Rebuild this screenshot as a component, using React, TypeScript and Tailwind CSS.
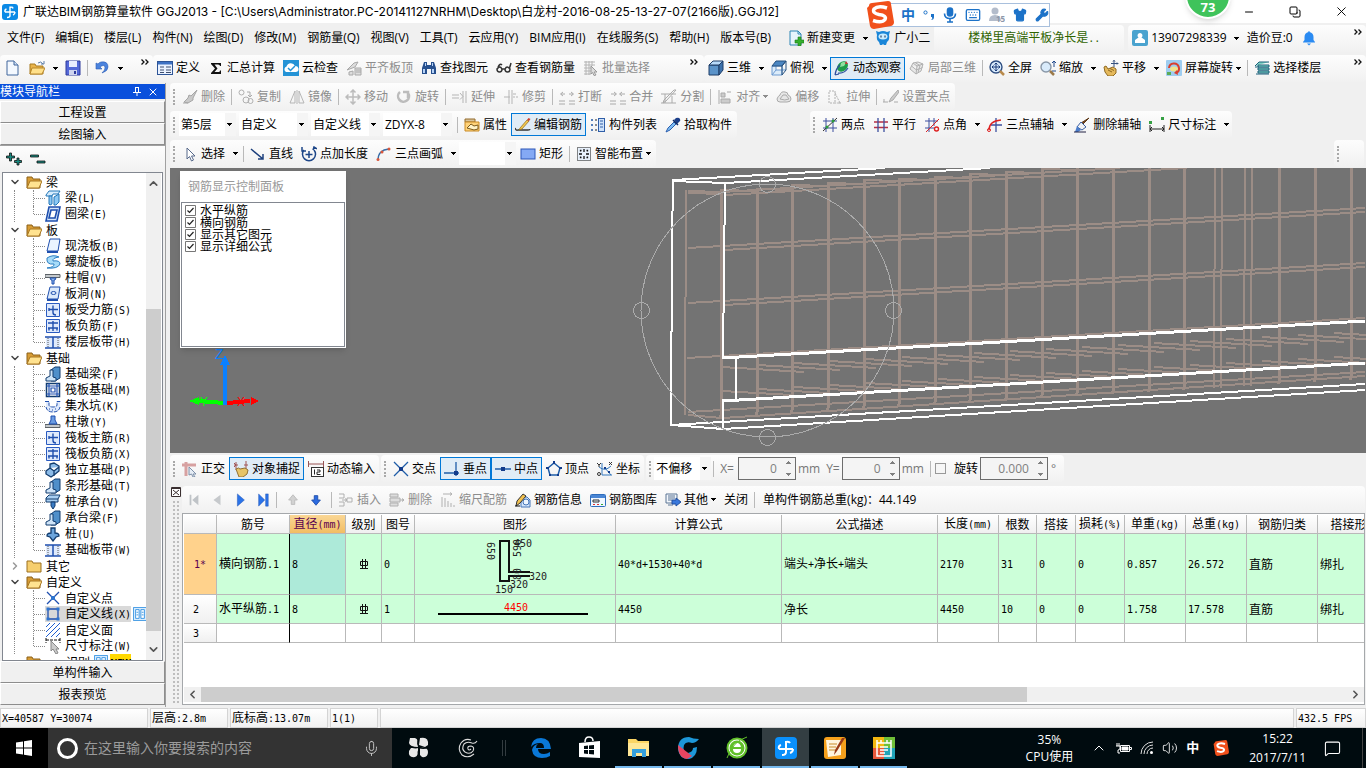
import React from 'react';
import { Mic, Keyboard, Shirt, Wrench, Minus, Copy, X, ChevronUp, ChevronDown, ChevronLeft, ChevronRight, Volume2, MessageSquare } from 'lucide-react';

const UI = "font-['Open_Sans','Noto_Sans_CJK_SC',sans-serif]";

const ICONS: Record<string, React.ReactNode> = {
  app: <><rect width="16" height="16" rx="3" fill="#0b8ae6" /><path d="M8 2.500v9q0 2-3 2M3 8h10M8 3.500q2.500-1 3 1M3 8q-.5-2.500 1.500-3M13 8q0 2.500-2 3" fill="none" stroke="#fff" strokeWidth="1.400" /></>,
  fresh: <><path d="M2 1h7l4 4v10H2z" fill="#f4f9ff" stroke="#41669c" /><path d="M9 1v4h4" fill="#cfe0f5" stroke="#41669c" /></>,
  open: <><path d="M1 14V4h5l1 2h7v8z" fill="#e9b44b" stroke="#a87a20" /><path d="M3 8h13l-3 6H1z" fill="#ffe08a" stroke="#b8872b" /><path d="M9 3q3-2.500 5 1M12 4h3V1" fill="none" stroke="#5e7fa8" /></>,
  save: <><path d="M1 1h14v14H1z" fill="#5468d8" stroke="#2e3a9c" /><path d="M4 1h8v6H4z" fill="#e9ecff" /><path d="M4 10h8v5H4z" fill="#cfd4ee" /><path d="M9 11h2v3H9z" fill="#2e3a9c" /></>,
  undo: <path d="M2 3v6h6L6 7q4-3 5 0 .5 3-3 6 6-2 6-6 0-6-7-5-2 .5-3 2z" fill="#4b83dd" stroke="#2b5db5" strokeWidth=".6" />,
  define: <><rect x=".5" y="1.500" width="15" height="13" fill="#eaf2ff" stroke="#2e5597" /><path d="M1 2h14v2.500H1z" fill="#3e72c4" /><path d="M3 7h4M3 10h4M3 12.500h4M9 7h5M9 10h5M9 12.500h5" stroke="#3f4f6e" /></>,
  sigma: <path d="M3 3h10v3h-1q0-1.500-2-1.500H6.500L9.500 8.500 6.500 12h4q1.500 0 1.500-1.500h1V14H3v-1l4-4.500L3 4z" fill="#111" />,
  cloud: <><rect width="16" height="16" fill="#2493d6" /><path d="M3 12a3 3 0 0 1 .5-5.500 4.500 4.500 0 0 1 8.500-.5 3 3 0 0 1 1 6z" fill="#fff" /><path d="m5 8 2.500 2.500L12 6" fill="none" stroke="#2493d6" strokeWidth="1.500" /></>,
  alignTop: <path d="m1 10 7-7 4-1-3 5zM3 12l4-1v4H3zM9 8h6v7H9zM10 10h5M10 12h5" fill="#ddd" stroke="#a8a8a8" />,
  binoc: <><path d="M3 2h3v3h4V2h3l2 6v6h-5V9H6v5H1V8z" fill="#27508e" /><path d="M2 9h2v4H2zM11 9h2v4h-2zM4 3h1v3H4zM11 3h1v3h-1z" fill="#b6d2f7" /></>,
  glasses: <path d="M1 9q3-4 5 0 0 3-2.500 3T1 9zM9 9q2-4 5 0 0 3-2.500 3T9 9zM6 9h3M2 7q2-4 4-2M13.500 8q1-3 1.500-5" fill="none" stroke="#333" strokeWidth="1.500" />,
  batch: <><path d="M1 2h11M1 5h11M1 8h7M1 11h7M1 14h7M3 1v14M6 1v14M9 1v5" stroke="#b4b4b4" /><path d="m8 6 6 6h-3l2 3-2 .5-1.500-3L8 14z" fill="#ddd" stroke="#999" /></>,
  cube: <><path d="M1 5h10v10H1z" fill="#5b93c9" stroke="#1e3c66" /><path d="m1 5 4-4h10l-4 4z" fill="#b8dafa" stroke="#1e3c66" /><path d="m11 5 4-4v9l-4 5z" fill="#3d72ac" stroke="#1e3c66" /></>,
  cubeTop: <><path d="M1 6h10v9H1zM5 1v9h10M5 10l-4 5" fill="#dcecfa" stroke="#6c9ad0" /><path d="m1 6 4-5h10l-4 5z" fill="#4b86c2" stroke="#26507e" /><path d="m11 6 4-5v9l-4 5z" fill="none" stroke="#26507e" /></>,
  orbit: <><ellipse cx="8.500" cy="6.500" rx="6" ry="4.500" transform="rotate(-40 8.500 6.500)" fill="#1f9c4a" /><path d="M7 3q3-2 5 0l-2 3-4 1z" fill="#8fe0a0" /><path d="M1 15q1-7 5-10M4 13q6 1 10-5M1 15l1-4M1 15l4-1" fill="none" stroke="#2c4f9e" strokeWidth="1.200" /><path d="m12 1 2 3-3 0z" fill="#c33" /></>,
  part3d: <path d="m1 9 3-6 5-1 5 2-2 7-5 3zM4 3l4 3 6-2M8 6l-1 8M2.500 6l5 4 6-2.500M6 2.500l5 3-2 7" fill="#e8e8e8" stroke="#b0b0b0" />,
  full: <><circle cx="7" cy="7" r="6" fill="#d7e9fb" stroke="#2f4f82" strokeWidth="1.400" /><path d="M7 3v8M3 7h8M5.500 4.500 7 3l1.500 1.500M5.500 9.500 7 11l1.500-1.500M4.500 5.500 3 7l1.500 1.500M9.500 5.500 11 7 9.500 8.500" fill="none" stroke="#1b3c7a" /><path d="m11 11 4 4" stroke="#b98b4c" strokeWidth="2.500" /></>,
  zoom: <><circle cx="6" cy="7" r="5" fill="#d9ebfb" stroke="#8a98a8" strokeWidth="1.400" /><path d="m10 11 4 4" stroke="#9c7a4a" strokeWidth="2.500" /><path d="M14 1v6M12 3l2-2 2 2M12 11h4" fill="none" stroke="#224a8c" /></>,
  pan: <><path d="M1 7l2-1 2 3 5-2 3 2v4l-3 3H5l-3-4z" fill="#e5b95c" stroke="#8f6a22" /><path d="M11 0v7M8 3.500h7M10 1.500 11 .5l1 1M14 2.500l1 1-1 1" stroke="#35517f" fill="none" /><path d="M5 10l4 2M7 8.500l4 2" stroke="#8f6a22" /></>,
  spin: <><rect width="16" height="16" rx="1" fill="#9ecdf0" /><ellipse cx="8" cy="9" rx="4" ry="2.500" fill="#f2e28a" /><path d="M1 12h4v3H1z" fill="#5cab56" /><path d="M3 8a5 5 0 1 1 7 5" fill="none" stroke="#d93f2e" strokeWidth="2" /><path d="m11 10-3 3 4 2z" fill="#d93f2e" /></>,
  floors: <path d="M1 6 5 2h10M1 7h4M4 5h11v2H4zM4 8h11v2H4zM4 11h11v2H4zM2 14h13" fill="#7fd4c4" stroke="#1b5f7b" />,
  brush: <path d="M15 1 9 7 7 6l-1 3-4 4 4 1 5-3V9zM1 14h5" fill="#c9c9c9" stroke="#a5a5a5" />,
  copy: <><g fill="none" stroke="#b0b0b0"><circle cx="3.500" cy="3.500" r="2.500" /><circle cx="8" cy="11" r="3" /><circle cx="12.500" cy="12" r="2.500" /></g><path d="M9 3h3v4M10 6l2 2 2-2" fill="none" stroke="#aaa" /></>,
  mirror: <path d="M6 2v12H1zM10 2v12h5zM8 1v14" fill="none" stroke="#b5b5b5" />,
  move: <path d="M8 1v14M1 8h14M5.500 3.500 8 1l2.500 2.500M5.500 12.500 8 15l2.500-2.500M3.500 5.500 1 8l2.500 2.500M12.500 5.500 15 8l-2.500 2.500" fill="none" stroke="#bcbcbc" strokeWidth="1.500" />,
  rotate: <path d="M4 3a5.500 5.500 0 1 0 8 1M12 9V3H7" fill="none" stroke="#bcbcbc" strokeWidth="2.500" />,
  extend: <path d="M0 6h7M0 9h7M8 4l3 3.500-3 3M11 2v12M14 2v12" fill="none" stroke="#b5b5b5" />,
  trim: <path d="M1 8h6M6 1v14M9 1v14M10 8h2M13 8h2M10 5h3" fill="none" stroke="#b5b5b5" />,
  breakUp: <path d="M0 12h6M10 12h6M0 15h6M10 15h6M2 5h4M4 3 1.500 5 4 7M10 5h4M12 3l2.500 2L12 7" fill="none" stroke="#aaa" />,
  merge: <path d="M0 12h6M10 12h6M0 15h6M10 15h6M1 5h5M4 3l2.500 2L4 7M10 5h5M12 3 9.500 5 12 7" fill="none" stroke="#aaa" />,
  split: <path d="M0 5h15M0 14h15M4 14V5M11 14V7M15 1 5 12l-3 2 1-3L13 1z" fill="none" stroke="#aaa" />,
  align: <path d="M2 1v14M4 4h4v4H4zM4 10h9v4H4zM10 3h4" fill="#ccc" stroke="#aaa" />,
  offset: <path d="M1 10q1-3 3-4 1-4 5-3 3 0 3 3 3 1 3 4 0 3-4 3H4q-3 0-3-3zM4 10l3-4h3l3 4q-4 2-9 0z" fill="#e6e6e6" stroke="#aaa" />,
  stretch: <path d="M2 2h6v12H2zM8 4l5 10H8M12 14h2" fill="none" stroke="#b0b0b0" strokeDasharray="2 1" />,
  grips: <path d="M0 13h5M11 13h4M1 10v3M15 1 8 9l-2 4 4-2 6-8z" fill="#ccc" stroke="#aaa" />,
  props: <><path d="M1 2h10v3H1z" fill="#d8c39a" stroke="#946c2c" /><path d="M1 5h14v9H1z" fill="#ffd37a" stroke="#c98a25" /><path d="m3 11 4-4 3 2 4-1v4l-4 1z" fill="#fff3c9" stroke="#7c5a1b" /></>,
  editBar: <><path d="M0 11q1 3 3 2h10q2 0 2-1" fill="none" stroke="#333" strokeWidth="1.300" /><path d="m5 11 7-8 2 1-7 8-3 1z" fill="#f4c84d" stroke="#8a6a1c" strokeWidth=".7" /><path d="m12 3 1.500-2 2 1L14 4z" fill="#d23c2a" /></>,
  list: <><path d="M1 2h2v2H1zM1 7h2v2H1zM1 12h2v2H1z" fill="#557fbb" /><path d="M5 3h2M5 8h2M5 13h2" stroke="#222" /><rect x="8.500" y="1.500" width="6" height="13" fill="#cfe2fa" stroke="#2f5ea8" /><path d="M10 4h3M10 7h3M10 10h3" stroke="#2f5ea8" /></>,
  picker: <><path d="m9 3 2-2q3-1 4 1t-1 3l-2 2z" fill="#1c3f8a" /><path d="m9 5-6 6-2 4 4-2 6-6z" fill="#7ebcf2" stroke="#2c5fae" /><path d="m8 3 5 5" stroke="#122d66" strokeWidth="1.500" /></>,
  twoPt: <><path d="M1 4h14M1 11h14M4 1v14M11 1v14" stroke="#3c4f9e" /><path d="M1 14 15 1" stroke="#333" /><circle cx="5" cy="10" r="1.500" fill="#2a9d3a" /><circle cx="11" cy="4" r="1.500" fill="#2a9d3a" /></>,
  parallel: <><path d="M1 5h14M1 10.500h14" stroke="#b52f45" strokeWidth="1.300" /><path d="M5 1v14M11 1v14" stroke="#3c4f9e" strokeWidth="1.300" /></>,
  ptAngle: <><path d="M1 4h13M1 11h9M5 1v14M10 1v8" stroke="#3c4f9e" /><path d="M2 15 15 2" stroke="#d22" /><circle cx="12.500" cy="12" r="2" fill="none" stroke="#d22" strokeWidth="1.400" /></>,
  threePt: <><path d="M9 1v14M4 8h11" stroke="#3c4f9e" strokeWidth="1.300" /><path d="M2 13Q2 4 14 3" fill="none" stroke="#d22" strokeWidth="1.400" /><circle cx="2" cy="13" r="1.500" fill="none" stroke="#d22" /></>,
  eraseAx: <><path d="M15 1 9 7l-2-1z" fill="#7a4b1f" stroke="#5b3514" /><path d="M7 5l5 5-4 3-5-3z" fill="#f2f2f2" stroke="#3b5ea0" /><path d="m3 9 4 4-3 2H1z" fill="#4d7ecb" /><path d="M0 15h12" stroke="#224" /></>,
  dim: <><path d="M1 8v7M15 8v7M1 12h14M3 10l-2 2 2 2M13 10l2 2-2 2" fill="none" stroke="#222" /><path d="M0 4h3v3H0zM12 0h3v3h-3z" fill="#35a043" /></>,
  cursor: <path d="M5 2v11l2.500-2.500L9.500 15l2-1-2-4H13z" fill="#fff" stroke="#57698a" />,
  line: <path d="m1 3 12 10M13 8v5H8" fill="none" stroke="#1c3f7c" strokeWidth="1.500" />,
  ptLen: <path d="M3 4a6.500 6.500 0 1 0 10 0M8 5v7M4.500 8.500h7M1 1v4h4M12 4l1-3 3 2" fill="none" stroke="#1d4688" strokeWidth="1.500" />,
  arc: <><path d="M2 14Q2 4 13 3" fill="none" stroke="#3b6ea8" strokeWidth="1.300" /><g fill="#d8573c"><circle cx="2" cy="13.500" r="1.500" /><circle cx="6" cy="6" r="1.500" /><circle cx="13" cy="3" r="1.500" /></g></>,
  rect: <rect x="1" y="3" width="14" height="10" fill="#84a9f4" stroke="#2c57b8" />,
  smart: <><rect x="1.500" y="1.500" width="13" height="13" fill="#e8f1fc" stroke="#111" strokeDasharray="1 1" /><path d="M8 3v3M8 10v3M3 8h3M10 8h3M4.500 5.500v-1h1M10.500 4.500h1v1M4.500 10.500v1h1M11.500 10.500v1h-1" fill="none" stroke="#111" strokeWidth="1.300" /></>,
  ortho: <><path d="M0 4h14M4 1v14" stroke="#d7a1a1" strokeWidth="3" /><path d="m7 6 7 7h-3l2 3h-2l-1.500-3L7 14z" fill="#e6edf5" stroke="#7d8fa8" /></>,
  snap: <><path d="M3 1v8M13 0v8M1 4h4M11 4h4M1 2l2 2-2 2" stroke="#a05252" fill="none" /><path d="M3 8q3-2 4 0l5-1 3 2-1 4-4 3H6z" fill="#e7c467" stroke="#927032" /></>,
  dyn: <><path d="M.5 0v6M15.500 0v6M1 3h14" stroke="#955" /><rect x="3.500" y="6.500" width="12" height="9" fill="#fff" stroke="#333" /><path d="M6.500 8.500v5M9 9h3v2H9v2.500h3.500" fill="none" stroke="#222" /></>,
  cross: <><path d="m1 1 14 14M15 1 1 15" stroke="#1f5da8" strokeWidth="1.300" /><path d="M6 6h4v4H6z" fill="#133c8b" /></>,
  perp: <><path d="M0 12h15M12 1v14" stroke="#1f5da8" strokeWidth="1.300" /><path d="M10 10h4v4h-4z" fill="#133c8b" /></>,
  mid: <><path d="M0 8h16" stroke="#1f5da8" strokeWidth="1.300" /><path d="M6 6h4v4H6z" fill="#133c8b" /></>,
  penta: <><path d="m8 2 6 5-2 7H4L2 7z" fill="none" stroke="#1f5da8" strokeWidth="1.500" /><path d="M7 0h2v3H7zM0 6h3v2H0zM13 6h3v2h-3zM3 13h2v2H3zM11 13h2v2h-2z" fill="#133c8b" /></>,
  coord: <><path d="M5 2v12h10M2 6q6 5 12-1M8 7l6 7" fill="none" stroke="#3478be" /><path d="M0 2l2 2 2-2M2 4v2M12 1l3 3M15 1l-3 3" fill="none" stroke="#333" /><circle cx="2" cy="13" r="1.500" fill="none" stroke="#333" /><path d="M7 6h2v2H7zM11 10h2v2h-2z" fill="#133c8b" /></>,
  insert: <path d="M1 2h5v4H1M1 10h5v4H1M9 6h5v4H9zM4 8h5M7 6.500 9 8 7 9.500" fill="none" stroke="#b0b0b0" />,
  delRow: <path d="M1 2h8v3H1zM1 6h10v4H1zM1 11h8v3H1zM11 8h4M13 6.500 15 8l-2 1.500" fill="#ddd" stroke="#b0b0b0" />,
  scaleBar: <path d="M3 2h9M10 .5 12 2l-2 1.500M2 5v10M5 6v9M8 9v6M11 11v4M14 13v2" fill="none" stroke="#b0b0b0" />,
  info: <><path d="M6 5h6l3 3v7H6z" fill="#d5e6fb" stroke="#4474b8" /><circle cx="11" cy="10" r="3" fill="#eef6ff" stroke="#4474b8" /><path d="M1 14 2 9l6-7 3 2-6 7z" fill="#f2c14e" stroke="#333" /><path d="M0 14h5" stroke="#111" /></>,
  gallery: <><rect x=".5" y="2.500" width="15" height="12" rx="1" fill="#f0f7ff" stroke="#2e6dbd" /><path d="M1 3h14v3H1z" fill="#4a86d4" /><path d="M3 8h6v2H3z" fill="none" stroke="#333" /><path d="M3 12h2v1H3zM7 12h2v1H7z" fill="#d33" /><path d="M11 12h2v1h-2z" fill="#3a3" /></>,
  other: <><path d="M1 2h11v9H1z" fill="#f2f6fb" stroke="#5a7494" /><path d="M3 4h7M3 6h7M3 8h4M3 13h5" stroke="#5a7494" /><path d="M7 8h4V6l5 4-5 4v-2H7z" fill="#3a78dc" stroke="#204f9f" /></>,
  first: <path d="M3 2v12h2V2zM13 2v12L6 8z" fill="#bfc3c7" />,
  prev: <path d="M12 2v12L4 8z" fill="#c6c9cc" />,
  next: <path d="M5 1v14l8-7z" fill="#2b73e8" stroke="#1b4fae" strokeWidth=".5" />,
  last: <path d="M3 1v14l7-7zM11 1h3v14h-3z" fill="#2b73e8" stroke="#1b4fae" strokeWidth=".5" />,
  up: <path d="m8 2 5 6h-3v5H6V8H3z" fill="#d2d2d2" stroke="#b9b9b9" />,
  down: <path d="m8 14 5-6h-3V3H6v5H3z" fill="#2b6be0" stroke="#1e4da8" />,
  newChange: <><path d="M2 1h8l3 3v11H2z" fill="#e7f4fc" stroke="#2e86b5" /><path d="M10 1v3h3" fill="none" stroke="#2e86b5" /><path d="M10 7h3v3h3v3h-3v3h-3v-3H7v-3h3z" fill="#35b02d" stroke="#1d7a18" strokeWidth=".6" /></>,
  robot: <><path d="M1 1l3 1q4-2 8 0l3-1-1 4q1 5-2 7l-1 3H9l-1-1-1 1H5l-1-3Q1 10 2 5z" fill="#1a86d8" /><ellipse cx="8" cy="6.500" rx="4.500" ry="3" fill="#c9ecff" /><path d="M6 5.500v2M10 5.500v2" stroke="#124" /></>,
  avatar: <><rect width="16" height="16" rx="2" fill="#4aa3cf" /><path d="M8 3a2.500 2.500 0 0 1 1.500 4.500L13 10v3H3v-3l3.500-2.500A2.500 2.500 0 0 1 8 3z" fill="#fff" /></>,
  bell: <path d="M7.500 1h1v1q4 1 4 5v3l1.500 2v.5H2V12l1.500-2V7q0-4 4-5zM6 13.500h4L8 15.500z" fill="#2b8bf2" />,
  folder: <><path d="M1 3h5l1 2h7v9H1z" fill="#d79c35" stroke="#8c6018" /><path d="M4 7h12l-3 7H1z" fill="#ffe28f" stroke="#a87722" /></>,
  folderShut: <path d="M1 3h5l1 2h8v9H1z" fill="#f6ce6d" stroke="#9c7020" />,
  beam: <><path d="M1 5 4 1h11l-2 3H8L7 6H1z" fill="#d5ecfd" stroke="#2377b8" /><path d="M4 6h3v8l-2 1-1-1zM9 7l5-3v8l-3 3H9z" fill="#8cc8f4" stroke="#2377b8" /></>,
  slab: <><path d="M5 1h10l-2 12H2z" fill="#eaf4ff" stroke="#1f4fae" /><path d="M2 13h11v2H2z" fill="#1f4fae" /></>,
  ring: <path d="M4 1h11l-3 14H1zM6 4h6l-2 8H4z" fill="#d5e7fb" stroke="#1f4fae" strokeWidth="1.600" fillRule="evenodd" />,
  spiral: <path d="M2 4q6-4 12-1-7 1-6 4 7-1 7 3-2 5-13 4 8-1 7-4-8 1-7-6z" fill="#a6dbf8" stroke="#2e80c4" />,
  cap: <><path d="M0 4.500h15v3H0z" fill="#c4c8cb" stroke="#5c6267" /><path d="M5 8h6l-1 2H9v4H7v-4H6z" fill="#8bb6ee" stroke="#1f4fae" /></>,
  hole: <><path d="M5 1h10l-2 12H2z" fill="#dceafb" stroke="#1f4fae" /><path d="M2 13h11v2H2z" fill="#1f4fae" /><ellipse cx="8.500" cy="7" rx="2.500" ry="1.500" fill="none" stroke="#1f4fae" /></>,
  force: <><path d="M1.500 1.500h13v13h-13z" fill="#dfeafc" stroke="#2a5bc0" /><path d="M4 6v3M4 7.500h9M8 3.500v7q0 2.500 3 2.500" fill="none" stroke="#1f4fae" strokeWidth="1.400" /></>,
  neg: <><path d="M1.500 1.500h13v13h-13z" fill="#dfeafc" stroke="#2a5bc0" /><path d="M3 5h10M3 10h10M8 3v10M4 10v2.500M12 10v2.500" fill="none" stroke="#1f4fae" strokeWidth="1.400" /></>,
  strip: <><path d="M1 3h14v11H1z" fill="#dfeafc" /><path d="M0 3h16M0 14h16M8 3v11" stroke="#1f4fae" strokeWidth="1.500" /><path d="M3 4v10M13 4v10" stroke="#555" strokeDasharray="1 1" /></>,
  footing: <><path d="m6 4 4-3h5v11l-5 3H6z" fill="#4f8fca" stroke="#123c6e" /><path d="M5 4h3v7l3 1v3H1v-3l4-2z" fill="#cfe4f8" stroke="#123c6e" /></>,
  raft: <><path d="M1.500 1.500h13v13h-13z" fill="#fff" stroke="#123c6e" strokeWidth="1.500" /><path d="M1 4h14M1 12h14M4 1v14M12 1v14M6 6h4v4H6z" fill="none" stroke="#1f4fae" strokeWidth="1.200" /></>,
  pit: <><path d="M1 3h3v5q4 3 8 0V3h3v5q-1 6-7 6T1 8z" fill="#dfeafc" /><path d="M0 3.500h4V7q0 2 4 2t4-2V3.500h4M1 9q1 5 7 5t7-5" fill="none" stroke="#1f4fae" strokeDasharray="4 1" /><path d="M4 11h1M7 12h1M10 11h1" stroke="#1f4fae" /></>,
  pier: <><path d="M0 10.500h15v3H0z" fill="#c4c8cb" stroke="#5c6267" /><path d="M6 2h4v4l2 4H4l2-4z" fill="#6b9ce2" stroke="#1f4fae" /></>,
  block: <path d="m1 9 4-3V2l4-1 5 3v5l-5 4-3 2-5-3zM5 6l4 3 5-4M9 9v5" fill="#8bbbe8" stroke="#123c6e" strokeWidth="1.300" />,
  pileCap: <><path d="m1 4 3-3h11l-2 4v3H1zM1 5h12" fill="#a9cff2" stroke="#123c6e" /><path d="M6 8h4v4l-2 3-2-3z" fill="#3a7cc4" stroke="#123c6e" /></>,
  pile: <path d="M6 2h4v5q4 0 4 3l-3 1-3 4-3-4-3-1q0-3 4-3z" fill="#6ba4dc" stroke="#123c6e" strokeWidth="1.300" />,
  pt: <><path d="m2 2 12 12M14 2 2 14" stroke="#1f4fae" strokeWidth="1.300" /><path d="M6 6h4v4H6z" fill="#2d74cf" /></>,
  poly: <><path d="M3 3h10v10H3z" fill="none" stroke="#1f4fae" strokeWidth="1.300" /><path d="M1.500 1.500h3v3h-3zM11.500 1.500h3v3h-3zM1.500 11.500h3v3h-3zM11.500 11.500h3v3h-3z" fill="#2d74cf" /></>,
  hatch: <path d="m1 5 4-4M1 10l9-9M1 15 15 1M6 15l9-9M11 15l4-4" stroke="#1f5fd0" />,
  dimTree: <><path d="M1 0v5M15 0v5M1 2h14" stroke="#111" strokeDasharray="3 1" /><path d="M6 3v10l2-2 3 5 2-1-2-4h3z" fill="#ccc" stroke="#888" /></>,
  guide: <><path d="M.5.5h15v15H.5z" fill="#d7ecff" stroke="#2f8fe0" /><path d="M3 3h4v10H3zM9 3h4v10H9z" fill="#fff" stroke="#2f8fe0" /><path d="M4 6h2M4 9h2M10 6h2M10 9h2" stroke="#2f8fe0" /></>,
};

const Icon: React.FC<{ name: string; className?: string }> = ({ name, className = 'size-4' }) => (
  <svg viewBox="0 0 16 16" className={`${className} shrink-0`} aria-hidden="true">{ICONS[name]}</svg>
);

// SimSun-like text: full-width Chinese with half-width Latin
const Sim: React.FC<{ children: string; leading?: string }> = ({ children, leading = 'leading-4' }) => (
  <span className={`font-['Noto_Sans_CJK_SC',sans-serif] text-xs whitespace-pre ${leading}`}>
    {children.split(/([\x20-\x7e]+)/).map((part, i) =>
      i % 2 ? <span key={i} className="font-['DejaVu_Sans_Mono',monospace] text-[10px]">{part}</span> : part
    )}
  </span>
);

const Caret: React.FC<{ className?: string }> = ({ className = '' }) => (
  <svg viewBox="0 0 5 3" className={`h-[3px] w-[5px] shrink-0 ${className}`} fill="currentColor" shapeRendering="crispEdges"><path d="M0 0h5L2.500 3z" /></svg>
);

interface ToolProps { icon?: string; label: string; off?: boolean; on?: boolean; split?: boolean; menu?: boolean }

const Tool: React.FC<ToolProps> = ({ icon, label, off, on, split, menu }) => (
  <>
    <button
      disabled={off}
      aria-pressed={on}
      className={`flex h-[23px] shrink-0 items-center gap-[3px] border-y px-1 whitespace-nowrap ${on ? 'border-[#0078d7] bg-[#e0ecf6] outline outline-1 -outline-offset-1 outline-[#0078d7]' : 'border-transparent'} ${off ? 'text-[#8d8d8d]' : 'text-black'}`}
    >
      {icon && <Icon name={icon} />}
      {label}
      {menu && <Caret />}
    </button>
    {split && <button aria-label={`${label} 更多`} className={`flex h-[23px] w-3 shrink-0 items-center justify-center ${off ? 'text-[#8d8d8d]' : ''}`}><Caret /></button>}
  </>
);

const Sep = () => <span className="mx-0.5 h-4 w-px shrink-0 bg-[#b9b9b9]" />;

const Grip = () => <span className="mx-[3px] h-4 w-0 shrink-0 border-l-2 border-dotted border-[#a9a9a9]" />;

const More: React.FC<{ className?: string }> = ({ className = '' }) => (
  <button aria-label="更多" className={`mb-3 shrink-0 px-1 ${className}`}>
    <svg viewBox="0 0 8 6" className="h-1.5 w-2" fill="none" stroke="#111" strokeWidth="1.300"><path d="m.5.5 2.500 2.500L.5 5.500M4.500.5 7 3 4.500 5.500" /></svg>
  </button>
);

const Bar: React.FC<{ className?: string; children?: React.ReactNode }> = ({ className = '', children }) => (
  <div className={`flex h-[27px] min-w-0 items-center overflow-hidden rounded-sm bg-linear-to-b from-[#fdfdfd] to-[#f1f1f1] ${className}`}>{children}</div>
);

const Combo: React.FC<{ label: string; value: string; className: string }> = ({ label, value, className }) => (
  <span className={`relative flex h-[23px] shrink-0 ${className}`}>
    <select aria-label={label} className="w-full appearance-none rounded-none border-r-[11px] border-[#f5f5f5] bg-white pl-0.5 outline-none">
      <option>{value}</option>
    </select>
    <Caret className="pointer-events-none absolute top-[10px] right-1" />
  </span>
);

const Spin: React.FC<{ label: string; value: string; className: string }> = ({ label, value, className }) => (
  <span className={`flex h-[23px] shrink-0 items-center border border-[#6d6d6d] bg-[#f4f4f4] text-[#808080] ${className}`}>
    <input aria-label={label} defaultValue={value} disabled className="w-full min-w-0 flex-1 bg-transparent text-right" />
    <span className="flex w-[18px] flex-col items-center gap-[9px] pl-1.5"><Caret className="rotate-180" /><Caret /></span>
  </span>
);

const MENUS = ['文件(F)', '编辑(E)', '楼层(L)', '构件(N)', '绘图(D)', '修改(M)', '钢筋量(Q)', '视图(V)', '工具(T)', '云应用(Y)', 'BIM应用(I)', '在线服务(S)', '帮助(H)', '版本号(B)'];

const TREE: { name: string; shut?: boolean; items: [string, string][] }[] = [
  { name: '梁', items: [['beam', '梁(L)'], ['ring', '圈梁(E)']] },
  { name: '板', items: [['slab', '现浇板(B)'], ['spiral', '螺旋板(B)'], ['cap', '柱帽(V)'], ['hole', '板洞(N)'], ['force', '板受力筋(S)'], ['neg', '板负筋(F)'], ['strip', '楼层板带(H)']] },
  { name: '基础', items: [['footing', '基础梁(F)'], ['raft', '筏板基础(M)'], ['pit', '集水坑(K)'], ['pier', '柱墩(Y)'], ['force', '筏板主筋(R)'], ['neg', '筏板负筋(X)'], ['block', '独立基础(P)'], ['footing', '条形基础(T)'], ['pileCap', '桩承台(V)'], ['footing', '承台梁(F)'], ['pile', '桩(U)'], ['strip', '基础板带(W)']] },
  { name: '其它', shut: true, items: [] },
  { name: '自定义', items: [['pt', '自定义点'], ['poly', '自定义线(X)'], ['hatch', '自定义面'], ['dimTree', '尺寸标注(W)']] },
];

const SELECTED = '自定义线(X)';

const Tree = () => (
  <ul className="min-w-0 flex-1 overflow-hidden pt-px">
    {TREE.map((g) => (
      <li key={g.name}>
        <div className="flex h-4 items-center">
          <span className="flex w-[23px] justify-center">
            {g.shut ? <ChevronRight size={12} color="#999" strokeWidth={3} /> : <ChevronDown size={12} color="#444" strokeWidth={3} />}
          </span>
          <Icon name={g.shut ? 'folderShut' : 'folder'} />
          <span className="pl-1"><Sim>{g.name}</Sim></span>
        </div>
        <ul>
          {g.items.map(([icon, label], i) => (
            <li key={label} className="flex h-4 items-center whitespace-nowrap">
              <span className="h-4 w-3 shrink-0 border-r border-dotted border-[#8a8a8a]" />
              <span className={`w-[19px] shrink-0 self-start border-r border-dotted border-[#8a8a8a] ${i === g.items.length - 1 ? 'h-2' : 'h-4'}`} />
              <span className="w-[11px] shrink-0 border-t border-dotted border-[#8a8a8a]" />
              <button className={`flex h-4 items-center gap-1 ${label === SELECTED ? 'bg-[#d9d9d9]' : ''}`}>
                <Icon name={icon} /><Sim>{label}</Sim>
              </button>
              {label === SELECTED && <Icon name="guide" className="ml-0.5 size-3.5" />}
            </li>
          ))}
        </ul>
      </li>
    ))}
    <li className="flex h-4 items-center">
      <span className="w-[23px]" /><Icon name="folder" />
      <span className="pl-6"><Sim>识别</Sim></span>
      <Icon name="guide" className="ml-1 size-3.5" />
      <b className="ml-0.5 bg-[#ffd800] text-[9px] leading-4">NEW</b>
    </li>
  </ul>
);

const ModuleButton: React.FC<{ children: string }> = ({ children }) => (
  <button className="h-[22px] w-full shrink-0 border border-t-white border-r-[#8d8d8d] border-b-[#8d8d8d] border-l-white bg-[#f0f0f0] text-center"><Sim>{children}</Sim></button>
);

const NavPanel = () => (
  <aside className="flex w-[166px] shrink-0 flex-col border-r border-[#a0a0a0] pt-px">
    <header className="mb-0.5 flex h-[15px] shrink-0 items-center bg-[#0a50dc] text-white">
      <span className="flex-1"><Sim>模块导航栏</Sim></span>
      <svg viewBox="0 0 8 9" className="h-[9px] w-2" fill="none" stroke="#fff"><path d="M2 .5h4M2.500 0v5M5.500 0v5M0 5.500h8M4 5v4" /></svg>
      <X size={12} className="mx-1.5" />
    </header>
    <ModuleButton>工程设置</ModuleButton>
    <ModuleButton>绘图输入</ModuleButton>
    <div className="flex h-[27px] shrink-0 items-center gap-2 border-t border-[#a0a0a0] bg-linear-to-b from-[#fdfdfd] to-[#f1f1f1] pl-1.5">
      <svg viewBox="0 0 16 14" className="h-3.5 w-4" fill="#18897f" stroke="#111" strokeWidth=".8"><path d="M3.500 1h2v3h3v2h-3v3h-2V6h-3V4h3zM11 6h2v2.500h2.500v2H13V13h-2v-2.500H8.500v-2H11z" /></svg>
      <svg viewBox="0 0 16 14" className="h-3.5 w-4" fill="#18897f" stroke="#111" strokeWidth=".8"><path d="M.5 3h8v2h-8zM7 9h8v2H7z" /></svg>
    </div>
    <div className="mx-0.5 flex min-h-0 flex-1 border border-[#828790] bg-white">
      <Tree />
      <div className="mr-px flex w-[15px] shrink-0 flex-col items-center bg-[#f0f0f0]">
        <ChevronUp size={13} strokeWidth={3} color="#555" className="my-1 shrink-0" />
        <span className="mt-[115px] w-full flex-1 bg-[#cdcdcd]" />
        <ChevronDown size={13} strokeWidth={3} color="#555" className="mt-3 mb-1 shrink-0" />
      </div>
    </div>
    <ModuleButton>单构件输入</ModuleButton>
    <ModuleButton>报表预览</ModuleButton>
    <span className="h-0.5" />
  </aside>
);

// stirrups: x, top, bottom, width
const STIRRUPS: [number, number, number, number][] = [
  [686, 190, 415, 2], [722, 189, 418, 3], [758, 188, 415, 3], [793, 184, 413, 3], [829, 182, 411, 3], [865, 179, 409, 3], [900, 178, 407, 3],
  [936, 176, 405, 3], [971, 173, 403, 3], [1007, 171, 401, 3], [1043, 168, 398, 3], [1078, 160, 396, 3], [1114, 160, 394, 3], [1150, 160, 392, 3],
  [1185, 160, 390, 3], [1215, 160, 388, 2], [1222, 160, 388, 2], [1245, 160, 386, 2], [1252, 160, 386, 2], [1280, 160, 384, 3], [1316, 160, 382, 3], [1352, 160, 380, 3],
];

const BARS = [
  'M688 248 1365 208', 'M725 250 1365 212', 'M688 303 1365 263', 'M725 305 1365 267', 'M687 358 1365 318',
  'M688 191 722 192 1120 168', 'M688 193 722 194M725 195 1187 168', 'M688 412 1365 372', 'M688 415 722 418 1365 376',
];

const Scene = () => (
  <svg className="block h-full w-full" shapeRendering="crispEdges" aria-label="三维视图">
    <g transform="translate(-170 -168)" fill="none">
      <g stroke="#9c8d86" strokeWidth="2">
        {STIRRUPS.map(([x, top, bottom, w]) => <path key={x} d={`M${x} ${top} ${x - 1} ${bottom}`} strokeWidth={w} />)}
        {STIRRUPS.slice(1, 11).map(([x, top]) => <path key={x} d={`M${x} ${top + 1}l34 1`} />)}
        {BARS.map((d) => <path key={d} d={d} />)}
        {Array.from({ length: 18 }, (_, i) => 722 + i * 36).map((x, i) => (
          <path key={x} d={`M${x} ${367 - i * 2}l82 5M${x} ${391 - i * 2}l70 4`} />
        ))}
      </g>
      <g stroke="#fff" strokeWidth="2">
        <path d="M885 168 673 180 672 244 671 425 1365 384M673 181 725 183 990 168M725 183 723 358M736 358v43M723 401v28M671 425 723 429 1365 390" />
        <path d="M722 358 1365 321M722 401 1365 363" strokeWidth="3" />
      </g>
      <g stroke="#ababab">
        <circle cx="767.500" cy="310.500" r="126.500" />
        <circle cx="641.500" cy="310.500" r="8" /><circle cx="893.500" cy="310.500" r="8" />
        <circle cx="767.500" cy="184.500" r="8" /><circle cx="767.500" cy="437.500" r="8" />
      </g>
      <path d="M224 403 198 401" stroke="#0f0" strokeWidth="4" /><path d="M189 401l10-4v8z" fill="#0f0" />
      <path d="M227 403 250 401" stroke="#f00" strokeWidth="4" /><path d="M259 401l-8-4v8z" fill="#f00" />
      <path d="M225 405V362" stroke="#0a80ff" strokeWidth="4" /><path d="M225 355l5 10h-10z" fill="#0a80ff" />
      <text x="215" y="359" fill="#0a80ff" className="font-['Liberation_Sans',sans-serif] text-sm">Z</text>
      <text x="237" y="406" fill="#f00" className="font-['Liberation_Sans',sans-serif] text-xs">X</text>
      <text x="200" y="406" fill="#0f0" className="font-['Liberation_Sans',sans-serif] text-xs">Y</text>
    </g>
  </svg>
);

const DisplayPanel = () => (
  <section className="absolute top-[3px] left-[10px] flex h-[177px] w-[166px] flex-col bg-white p-px shadow-md">
    <h2 className="flex h-[30px] shrink-0 items-center pl-[7px] text-[#999]">钢筋显示控制面板</h2>
    <div className="flex-1 border border-[#828790] pt-px pl-[3px]">
      {['水平纵筋', '横向钢筋', '显示其它图元', '显示详细公式'].map((t) => (
        <label key={t} className="flex h-3 items-center gap-1">
          <input type="checkbox" defaultChecked className="peer sr-only" />
          <svg viewBox="0 0 11 11" className="size-[11px] shrink-0" fill="#fff" stroke="#777"><path d="M.5.5h10v10H.500z" /><path d="m2.500 5.500 2 2 4-4.500" fill="none" stroke="#222" strokeWidth="1.200" /></svg>
          <Sim leading="leading-3">{t}</Sim>
        </label>
      ))}
    </div>
  </section>
);

const COLS: [string, string][] = [
  ['', 'w-[33px]'], ['筋号', 'w-[73px]'], ['直径(mm)', 'w-[56px]'], ['级别', 'w-[36px]'], ['图号', 'w-[33px]'], ['图形', 'w-[201px]'],
  ['计算公式', 'w-[166px]'], ['公式描述', 'w-[156px]'], ['长度(mm)', 'w-[61px]'], ['根数', 'w-[38px]'], ['搭接', 'w-[39px]'],
  ['损耗(%)', 'w-[49px]'], ['单重(kg)', 'w-[61px]'], ['总重(kg)', 'w-[61px]'], ['钢筋归类', 'w-[71px]'], ['搭接形式', 'w-[74px]'],
];

const grade = (
  <svg viewBox="0 0 10 10" className="mx-auto size-2.5" fill="none" stroke="#111"><path d="M1.500 2.500h7v4h-7zM3.500 0v9M6.500 0v9M1 9.500h8" /></svg>
);

const LABEL = "font-['DejaVu_Sans_Mono',monospace] text-[10px]";

const stirrupShape = (
  <svg viewBox="0 0 200 60" className="block h-[60px] w-[200px]">
    <path d="M115 38H94V7h-9v40h9v-5h21" fill="none" stroke="#111" strokeWidth="2" />
    <g className={LABEL} fill="#222">
      <text transform="translate(72 8) rotate(90)">650</text><text transform="translate(106 23) rotate(-90)">590</text>
      <text x="99" y="13">450</text><text transform="translate(106 46) rotate(-90)">80</text>
      <text x="114" y="46">320</text><text x="95" y="54">320</text><text x="80" y="59">150</text>
    </g>
  </svg>
);

const lineShape = (
  <svg viewBox="0 0 200 28" className="block h-7 w-[200px]">
    <path d="M23 19h150" stroke="#000" strokeWidth="2" />
    <text x="89" y="16" fill="#f00" className={LABEL}>4450</text>
  </svg>
);

const ROWS: { h: string; cells: React.ReactNode[] }[] = [
  { h: 'h-[61px]', cells: ['横向钢筋.1', '8', grade, '0', stirrupShape, '40*d+1530+40*d', '端头+净长+端头', '2170', '31', '0', '0', '0.857', '26.572', '直筋', '绑扎'] },
  { h: 'h-[29px]', cells: ['水平纵筋.1', '8', grade, '1', lineShape, '4450', '净长', '4450', '10', '0', '0', '1.758', '17.578', '直筋', '绑扎'] },
  { h: 'h-[19px]', cells: Array(15).fill('') },
];

const RebarTable = () => (
  <table className="w-[1208px] table-fixed border-separate border-spacing-0">
    <thead>
      <tr className="h-[19px]">
        {COLS.map(([name, w], i) => (
          <th key={i} className={`overflow-hidden border-r border-b border-[#b9b9b9] p-0 font-normal whitespace-nowrap ${w} ${i === 2 ? 'bg-linear-to-b from-[#fad795] to-[#f2bd62] text-[#5a0050]' : 'bg-linear-to-b from-white to-[#f0f0f0]'}`}><Sim>{name}</Sim></th>
        ))}
      </tr>
    </thead>
    <tbody>
      {ROWS.map((row, r) => (
        <tr key={r} className={`${row.h} ${r < 2 ? 'bg-[#ccffd9]' : 'bg-white'}`}>
          <th className={`border-r border-b border-[#b9b9b9] p-0 font-normal ${r === 0 ? 'bg-[#ffd28c] font-bold text-[#5a0050]' : 'bg-linear-to-b from-white to-[#f0f0f0] pr-2'}`}><Sim>{r === 0 ? '1*' : String(r + 1)}</Sim></th>
          {row.cells.map((c, i) => (
            <td key={i} className={`overflow-hidden border-r border-b border-[#b9b9b9] p-0 whitespace-nowrap ${i === 0 ? 'border-r-black' : ''} ${r === 0 && i === 1 ? 'bg-[#adead9]' : ''}`}>
              {typeof c === 'string' ? <div className="pl-0.5"><Sim>{c}</Sim></div> : c}
            </td>
          ))}
        </tr>
      ))}
    </tbody>
  </table>
);

const RowButton: React.FC<{ icon: string; label: string }> = ({ icon, label }) => (
  <button aria-label={label} className="flex w-[23px] shrink-0 justify-center"><Icon name={icon} className="size-3.5" /></button>
);

const RebarPanel = () => (
  <section className="flex h-[222px] shrink-0">
    <div className="flex w-3 flex-col items-center pt-0.5 pb-1">
      <svg viewBox="0 0 10 10" className="size-2.5 shrink-0" fill="#fff" stroke="#3a2f30"><path d="M.5.5h9v9h-9zM2 3l6 5M8 3 2 8M0 1.500h10" /></svg>
      <span className="mt-1 w-1.5 flex-1 border-x-2 border-dotted border-[#bdbdbd]" />
    </div>
    <div className="flex min-w-0 flex-1 flex-col pr-px">
      <Bar className="mt-px">
        <RowButton icon="first" label="首条" />
        <RowButton icon="prev" label="上一条" />
        <RowButton icon="next" label="下一条" />
        <RowButton icon="last" label="末条" />
        <Sep />
        <div className="mx-0.5 flex">
          <RowButton icon="up" label="上移" />
          <RowButton icon="down" label="下移" />
        </div>
        <Sep />
        <Tool icon="insert" label="插入" off />
        <Tool icon="delRow" label="删除" off />
        <Tool icon="scaleBar" label="缩尺配筋" off />
        <Tool icon="info" label="钢筋信息" />
        <Tool icon="gallery" label="钢筋图库" />
        <Tool icon="other" label="其他" menu />
        <Tool label="关闭" />
        <Sep />
        <span className="px-1.5 whitespace-nowrap">单构件钢筋总重(kg)：44.149</span>
      </Bar>
      <div className="flex min-h-0 flex-1 flex-col overflow-hidden border border-[#a5a8ab] bg-white pt-px pl-px">
        <RebarTable />
        <div className="mt-auto mb-0.5 flex h-[15px] items-center bg-[#f0f0f0]">
          <ChevronLeft size={13} strokeWidth={3} color="#555" className="mx-0.5 shrink-0" />
          <span className="h-full w-[70%] bg-[#cdcdcd]" />
          <ChevronRight size={13} strokeWidth={3} color="#555" className="mr-0.5 ml-auto shrink-0" />
        </div>
      </div>
      <span className="h-0.5" />
    </div>
  </section>
);

const SogouS: React.FC<{ className: string }> = ({ className }) => (
  <svg viewBox="0 0 28 28" className={`${className} shrink-0`}>
    <path d="M3 5q0-3 3-3l16-2q3 0 3 3l3 18q0 3-3 4L8 28q-3 0-4-3L1 7z" fill="#f1501b" />
    <path d="M21 7q-9-3-13 1-2 4 5 5.500 8 1 6 5-3 4-12 1" fill="none" stroke="#fff" strokeWidth="3.500" />
  </svg>
);

const ImeBar = () => (
  <div className="absolute top-0 right-[316px] z-10 flex h-[27px] items-center pt-0.5">
    <SogouS className="relative z-10 size-7" />
    <div className="-ml-3 flex h-6 w-[168px] items-center gap-2 border border-[#a9c0dd] bg-white pl-[18px] text-[#1c72c8]">
      <b className="text-sm leading-none">中</b>
      <svg viewBox="0 0 12 12" className="size-3 shrink-0" fill="#1c72c8"><circle cx="2.500" cy="3.500" r="1.600" fill="none" stroke="#1c72c8" /><path d="M8 5h3v3q0 3-3 3 2-1 1-3H8z" /></svg>
      <svg viewBox="0 0 14 16" className="h-4 w-3.5 shrink-0" fill="none" stroke="#1c72c8" strokeWidth="1.600"><rect x="4.500" y="1" width="5" height="8" rx="2.500" fill="#1c72c8" /><path d="M1.500 6.500q0 5 5.500 5t5.500-5M7 11v3.500M4 15h6" /></svg>
      <Keyboard size={16} className="shrink-0" />
      <svg viewBox="0 0 16 16" className="size-4 shrink-0" fill="#b3bccb"><circle cx="6" cy="4" r="3.500" /><path d="M0 14q0-6 6-6t6 6z" /><text x="7" y="15" className="text-[8px] font-bold" fill="#8c97aa">15</text></svg>
      <Shirt size={14} fill="currentColor" className="shrink-0" />
      <Wrench size={14} fill="currentColor" className="shrink-0" />
    </div>
  </div>
);

const TitleBar = () => (
  <header className="relative flex h-[23px] shrink-0 items-center bg-white pr-0.5 pl-0.5">
    <Icon name="app" />
    <h1 className="flex-1 pl-[5px] font-['Inter','Noto_Sans_CJK_SC',sans-serif] whitespace-nowrap">广联达BIM钢筋算量软件 GGJ2013 - [C:\Users\Administrator.PC-20141127NRHM\Desktop\白龙村-2016-08-25-13-27-07(2166版).GGJ12]</h1>
    <ImeBar />
    <span className="absolute -top-[27px] right-[135px] z-10 flex size-[46px] items-end justify-center rounded-full border-2 border-white bg-[#3fc35b] pb-[3px] text-[13px] leading-none font-bold text-white shadow-md">73</span>
    <button aria-label="最小化" className="flex w-[46px] justify-center"><Minus size={12} strokeWidth={2} /></button>
    <button aria-label="还原" className="flex w-[46px] justify-center"><Copy size={12} strokeWidth={2} className="-scale-x-100 rotate-90" /></button>
    <button aria-label="关闭" className="flex w-[46px] justify-center"><X size={15} strokeWidth={1.5} /></button>
  </header>
);

const TASKS: { name: string; icon: React.ReactNode; run?: boolean; on?: boolean }[] = [
  { name: '花瓣', icon: <g fill="#e8e8e8"><path d="M3 2h5q4 1 3 9-8 0-9-4zM13 2q9-2 8 7l-3 2-6-2zM11 12q1 8-3 9-7 1-6-6l2-3zM13 12q8-1 8 4 0 6-6 5l-2-2z" /><path d="M12 2q-3 6 1 10-3 3-1 9M2 10q6 3 10 1 4 3 9 0" fill="none" stroke="#000b0f" strokeWidth="1.200" /></g> },
  { name: '造价', icon: <path d="M21 5q-2 3-5 2-5-2-8 1-3 5 1 8 5 3 8-1 2-4-2-5-4 0-3 3 1 2 3 0M15 4Q9 2 5 7q-4 6 1 12 6 4 12-1" fill="none" stroke="#ddd" strokeWidth="1.100" /> },
  { name: 'Edge', icon: <path d="M2 11Q3 2 12 2t10 11H9q0 5 6 5 3 0 6-2v4q-3 2-8 2-9 0-10-8 1-5 6-6-2 1-2 4h8q0-5-4-5-6 0-9 4z" fill="#0a78d7" /> },
  { name: '商店', icon: <><path d="M1 7l21-2v17l-21-1z" fill="#fff" /><path d="M7 6q0-5 4-5t4 4" fill="none" stroke="#fff" strokeWidth="1.500" /><path d="M6 10l4-.5V13H6zM11 9.500l5-.5v4h-5zM6 14h4v4l-4-.5zM11 14h5v4.500l-5-.5z" fill="#000b0f" /></> },
  { name: '资源管理器', run: true, icon: <><path d="M1 3h8l2 2h11v15H1z" fill="#fbd564" /><path d="M1 7h21v13H1z" fill="#ffe796" /><path d="M5 13h14v8h-4v-4H9v4H5z" fill="#35a0dc" /></> },
  { name: '广联达', run: true, icon: <><path d="M23 3q-3 4-7 4-6-2-8 2-2 7 4 8 5-1 5-5l4-1q0 10-8 12-10 0-11-10Q2 1 13 1q4 2 10 2z" fill="#1d97d8" /><path d="m2 9 14 11-5 3Q2 22 2 9z" fill="#e94560" /></> },
  { name: '浏览器', run: true, icon: <><circle cx="12" cy="12" r="9.500" fill="#fff" stroke="#61c02a" strokeWidth="2" /><circle cx="12" cy="12" r="7.500" fill="#61c02a" /><path d="M8 11h8q-1-4-4-4t-4 4zM8 13h8q0 4-4 4t-4-4z" fill="#fff" /><path d="M2 22Q8 5 22 1" fill="none" stroke="#61c02a" /></> },
  { name: 'GGJ', run: true, on: true, icon: <><rect x="1" y="1" width="22" height="22" rx="4" fill="#0a90fb" /><path d="M12 5v11q0 3-4 3M5 13h14M12 6q3-1 4 1M5 13q-1-3 2-4M19 13q0 3-3 4" fill="none" stroke="#fff" strokeWidth="2" /></> },
  { name: '记事', run: true, icon: <><rect x="1" y="1" width="22" height="22" rx="3" fill="#f5a11c" /><path d="M3 4h15v15L5 21z" fill="#fff6df" /><path d="M6 8h8M6 11h7M6 14h6" stroke="#c98d2b" /><path d="m22 2-8 13-3 4 1-5 7-12z" fill="#9a3b16" /></> },
  { name: '表格', run: true, icon: <><path d="M1 1h11v11H1z" fill="#f4b80f" /><path d="M12 1h11v11H12z" fill="#6fbf38" /><path d="M1 12h11v11H1z" fill="#e9573a" /><path d="M12 12h11v11H12z" fill="#1fa3b8" /><path d="M5 7h14v13H5zM5 4v3M9 4v3M15 4v3M19 4v3M8 11h8M8 14h8M8 17h5" fill="none" stroke="#fff" strokeWidth="1.500" /></> },
];

const Taskbar = () => (
  <footer className="flex h-10 shrink-0 items-stretch bg-[#000b0f] text-xs text-white">
    <button aria-label="开始" className="flex w-12 items-center justify-center bg-black">
      <svg viewBox="0 0 16 16" className="size-4" fill="#fff"><path d="M0 2.500 7 1.500v6H0zM8 1.300 16 0v7.500H8zM0 8.500h7v6L0 13.500zM8 8.500h8V16l-8-1.300z" /></svg>
    </button>
    <label className="flex w-[344px] items-center bg-[#333] pl-[9px]">
      <span className="mr-1.5 size-[21px] rounded-full border-[3px] border-white" />
      <input placeholder="在这里输入你要搜索的内容" className="min-w-0 flex-1 bg-transparent text-sm outline-none placeholder:text-[#9b9b9b]" />
      <Mic size={17} color="#ccc" strokeWidth={1.3} className="mr-3" />
    </label>
    <div className="flex pl-0.5">
      {TASKS.map((t, i) => (
        <React.Fragment key={t.name}>
          <button aria-label={t.name} className={`mx-px flex w-[47px] items-center justify-center border-y-2 border-t-transparent ${t.run ? 'border-b-[#76b9ed]' : 'border-b-transparent'} ${t.on ? 'bg-[#333e42]' : ''}`}>
            <svg viewBox="0 0 24 24" className="size-6">{t.icon}</svg>
          </button>
          {i === 1 && <span className="mx-2.5 h-4 w-1 self-center border-x border-[#333c40]" />}
        </React.Fragment>
      ))}
    </div>
    <div className="ml-auto flex items-center">
      <div className="mr-[18px] text-center leading-[17px]">35%<br />CPU使用</div>
      <div className="flex items-center gap-2">
        <ChevronUp size={16} strokeWidth={1.5} />
        <svg viewBox="0 0 17 12" className="h-3 w-[17px]" fill="none" stroke="#fff"><path d="M5.500 3.500h9v6h-9zM15 5.500h1.500v2H15M2 1v3M4 1v3M1 4h4v2q0 2-2 2v3h2" /><path d="M7 5h6v3H7z" fill="#fff" /></svg>
        <svg viewBox="0 0 14 14" className="size-3.5" fill="none" stroke="#ddd"><path d="M1 13A12 12 0 0 1 13 1M4 13a9 9 0 0 1 9-9M7 13a6 6 0 0 1 6-6" /><circle cx="11.500" cy="11.500" r="1.500" fill="#fff" stroke="none" /></svg>
        <Volume2 size={16} strokeWidth={1.3} />
        <b className="text-[13px]">中</b>
        <SogouS className="ml-1.5 size-4" />
      </div>
      <div className="ml-5 text-center leading-[19px]">15:22<br />2017/7/11</div>
      <button aria-label="通知" className="ml-[18px] w-[38px]"><MessageSquare size={17} strokeWidth={1.5} /></button>
      <span className="h-10 w-1 border-l border-[#444]" />
    </div>
  </footer>
);

const StatusCell: React.FC<{ className: string; children?: string }> = ({ className, children }) => (
  <span className={`flex h-5 items-center border border-[#d4d4d4] bg-linear-to-b from-white to-[#f1f1f1] pl-px ${className}`}><Sim>{children ?? ''}</Sim></span>
);

export default function App() {
  return (
    <div className={`flex h-screen flex-col overflow-hidden bg-[#f0f0f0] text-xs leading-4 text-black ${UI}`}>
      <TitleBar />

      <nav className="flex h-[30px] shrink-0 items-center">
        <div className="flex items-center gap-px pl-0.5">
          {MENUS.map((m) => <button key={m} className="px-[5px] whitespace-nowrap">{m}</button>)}
        </div>
        <div className="ml-2 flex items-center">
          <Tool icon="newChange" label="新建变更" split />
          <Tool icon="robot" label="广小二" />
        </div>
        <Bar className="mr-1 w-[190px] pl-[34px]">
          <a href="#tip" className="whitespace-nowrap text-[#2f6400]"><Sim>楼梯里高端平板净长是..</Sim></a>
        </Bar>
        <Bar className="flex-1">
          <Tool icon="avatar" label="13907298339" split />
          <Tool label="造价豆:0" />
          <button aria-label="消息" className="px-1"><Icon name="bell" /></button>
          <More className="ml-auto" />
        </Bar>
      </nav>

      <div className="flex h-[30px] shrink-0 items-center">
        <Bar className="w-[153px] shrink-0 pl-px">
          <Tool icon="fresh" label="" />
          <Tool icon="open" label="" split />
          <Tool icon="save" label="" />
          <Sep />
          <Tool icon="undo" label="" split />
          <More className="ml-auto" />
        </Bar>
        <Bar className="w-[551px] shrink-0">
          <Tool icon="define" label="定义" />
          <Tool icon="sigma" label="汇总计算" />
          <Tool icon="cloud" label="云检查" />
          <Tool icon="alignTop" label="平齐板顶" off />
          <Tool icon="binoc" label="查找图元" />
          <Tool icon="glasses" label="查看钢筋量" />
          <Tool icon="batch" label="批量选择" off />
          <More className="mr-0.5 ml-auto" />
        </Bar>
        <Bar className="flex-1">
          <Tool icon="cube" label="三维" split />
          <Tool icon="cubeTop" label="俯视" split />
          <Tool icon="orbit" label="动态观察" on />
          <Tool icon="part3d" label="局部三维" off />
          <Sep />
          <Tool icon="full" label="全屏" />
          <Tool icon="zoom" label="缩放" split />
          <Tool icon="pan" label="平移" split />
          <Tool icon="spin" label="屏幕旋转" menu />
          <Sep />
          <Tool icon="floors" label="选择楼层" />
          <More className="ml-auto" />
        </Bar>
      </div>

      <div className="flex min-h-0 flex-1">
        <NavPanel />
        <main className="flex min-w-0 flex-1 flex-col pl-1">
          <div className="flex h-7 shrink-0">
            <Bar className="pr-px">
              <Grip />
              <Tool icon="brush" label="删除" off /><Sep />
              <Tool icon="copy" label="复制" off />
              <Tool icon="mirror" label="镜像" off /><Sep />
              <Tool icon="move" label="移动" off />
              <Tool icon="rotate" label="旋转" off /><Sep />
              <Tool icon="extend" label="延伸" off />
              <Tool icon="trim" label="修剪" off /><Sep />
              <Tool icon="breakUp" label="打断" off />
              <Tool icon="merge" label="合并" off />
              <Tool icon="split" label="分割" off /><Sep />
              <Tool icon="align" label="对齐" off menu />
              <Tool icon="offset" label="偏移" off />
              <Tool icon="stretch" label="拉伸" off /><Sep />
              <Tool icon="grips" label="设置夹点" off />
            </Bar>
          </div>
          <div className="flex h-7 shrink-0">
            <Bar className="gap-[3px] pr-px">
              <Grip />
              <Combo label="楼层" value="第5层" className="-ml-0.5 w-[57px]" />
              <Combo label="构件类型" value="自定义" className="w-[69px]" />
              <Combo label="构件" value="自定义线" className="w-[69px]" />
              <Combo label="名称" value="ZDYX-8" className="w-[69px]" />
              <div className="flex items-center">
                <Sep />
                <Tool icon="props" label="属性" />
                <Tool icon="editBar" label="编辑钢筋" on />
                <Tool icon="list" label="构件列表" />
                <Tool icon="picker" label="拾取构件" />
              </div>
            </Bar>
            <Bar className="ml-[73px]">
              <Grip />
              <Tool icon="twoPt" label="两点" />
              <Tool icon="parallel" label="平行" />
              <Tool icon="ptAngle" label="点角" split />
              <Tool icon="threePt" label="三点辅轴" split />
              <Tool icon="eraseAx" label="删除辅轴" />
              <Tool icon="dim" label="尺寸标注" split />
            </Bar>
          </div>
          <div className="flex h-[29px] shrink-0 items-center">
            <Bar className="pr-px">
              <Grip />
              <Tool icon="cursor" label="选择" split /><Sep />
              <Tool icon="line" label="直线" />
              <Tool icon="ptLen" label="点加长度" />
              <Tool icon="arc" label="三点画弧" split />
              <Combo label="弧参数" value="" className="w-[57px]" />
              <Tool icon="rect" label="矩形" /><Sep />
              <Tool icon="smart" label="智能布置" menu />
            </Bar>
            <Bar className="mr-0.5 ml-auto w-[30px]"><Grip /></Bar>
          </div>

          <div className="relative min-h-0 flex-1 overflow-hidden bg-[#737373]">
            <Scene />
            <DisplayPanel />
          </div>

          <div className="flex h-8 shrink-0 gap-0.5 pt-0.5">
            <Bar>
              <Grip />
              <Tool icon="ortho" label="正交" />
              <Tool icon="snap" label="对象捕捉" on />
              <Tool icon="dyn" label="动态输入" />
            </Bar>
            <Bar>
              <Grip />
              <Tool icon="cross" label="交点" />
              <Tool icon="perp" label="垂点" on />
              <Tool icon="mid" label="中点" on />
              <Tool icon="penta" label="顶点" />
              <Tool icon="coord" label="坐标" />
            </Bar>
            <Bar className="pr-2">
              <Grip />
              <Combo label="偏移方式" value="不偏移" className="w-[57px]" />
              <Sep />
              <span className="px-1 text-[#777]">X=</span>
              <Spin label="X 偏移" value="0" className="w-[58px]" />
              <span className="pr-1 pl-0.5 text-[#777]">mm</span>
              <span className="px-0.5 text-[#777]">Y=</span>
              <Spin label="Y 偏移" value="0" className="w-[58px]" />
              <span className="pr-1 pl-0.5 text-[#777]">mm</span>
              <Sep />
              <label className="flex items-center gap-2 px-0.5"><input type="checkbox" className="size-[11px] appearance-none border border-[#999] bg-[#f6f6f6]" />旋转</label>
              <Spin label="旋转角度" value="0.000" className="w-[68px]" />
              <span className="pl-[3px] text-[#777]">°</span>
            </Bar>
          </div>

          <RebarPanel />
        </main>
      </div>

      <div className="flex h-[21px] shrink-0 items-end gap-0.5">
        <StatusCell className="w-[148px]">X=40587 Y=30074</StatusCell>
        <StatusCell className="w-[78px]">层高:2.8m</StatusCell>
        <StatusCell className="w-[98px]">底标高:13.07m</StatusCell>
        <StatusCell className="w-[48px]">1(1)</StatusCell>
        <StatusCell className="flex-1" />
        <StatusCell className="w-[70px]">432.5 FPS</StatusCell>
      </div>

      <Taskbar />
    </div>
  );
}
